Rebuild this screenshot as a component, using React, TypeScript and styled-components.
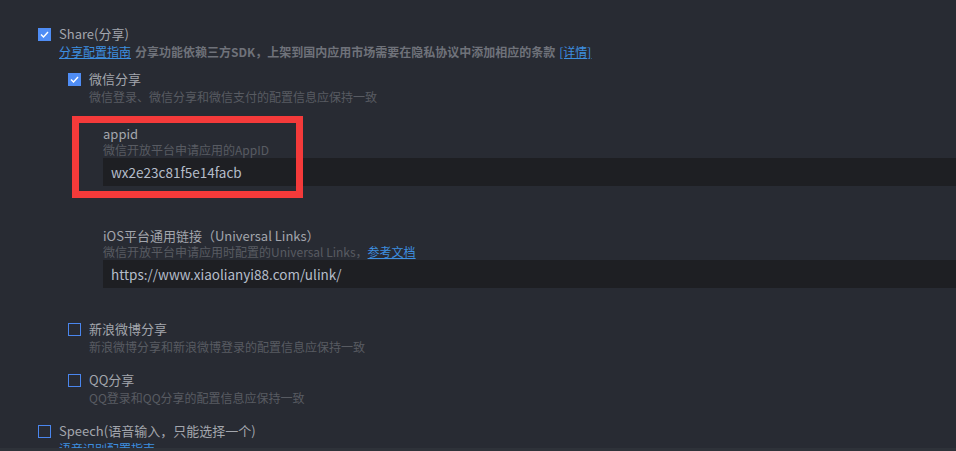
import React, { FC } from "react";
import styled, { createGlobalStyle } from "styled-components";

const GlobalStyle = createGlobalStyle`
  html, body {
    margin: 0;
    padding: 0;
    background: #282b33;
    overflow: hidden;
  }
  body {
    font-family: "Noto Sans CJK SC", "Noto Sans", sans-serif;
  }
`;

const Page = styled.div`
  position: relative;
  width: 956px;
  height: 451px;
  overflow: hidden;
  background: #282b33;
  padding: 24px 0 0 38px;
  box-sizing: border-box;
`;

const Section = styled.div<{ $gap?: number }>`
  display: flex;
  flex-direction: column;
  margin-top: ${(p) => p.$gap ?? 0}px;
`;

const CheckRow = styled.label`
  display: flex;
  align-items: center;
  height: 20px;
  gap: 8px;
  cursor: pointer;
`;

const Box = styled.span<{ $checked: boolean }>`
  width: 13px;
  height: 13px;
  box-sizing: border-box;
  flex-shrink: 0;
  display: flex;
  align-items: center;
  justify-content: center;
  background: ${(p) => (p.$checked ? "#4f8df5" : "transparent")};
  border: ${(p) => (p.$checked ? "none" : "1.5px solid #4a86ee")};
`;

const Title = styled.span`
  font-size: 13px;
  line-height: 20px;
  color: #a3a6ad;
`;

const Hint = styled.div<{ $bold?: boolean; $indent?: number }>`
  font-size: 12px;
  line-height: 16px;
  height: 16px;
  padding-left: ${(p) => p.$indent ?? 21}px;
  color: ${(p) => (p.$bold ? "#6f727a" : "#585b62")};
  font-weight: ${(p) => (p.$bold ? 600 : 400)};
  white-space: nowrap;
`;

const DocLink = styled.a`
  color: #3d8fe0;
  text-decoration: underline;
  font-weight: 400;
  margin-right: 4px;
`;

const TailLink = styled.a`
  color: #3d8fe0;
  text-decoration: underline;
  font-weight: 400;
  margin-left: 4px;
`;

const Children = styled.div`
  display: flex;
  flex-direction: column;
  padding-left: 30px;
  margin-top: 9px;
`;

const Field = styled.div<{ $gap: number }>`
  display: flex;
  flex-direction: column;
  padding-left: 35px;
  margin-top: ${(p) => p.$gap}px;
`;

const FieldLabel = styled.div`
  font-size: 13px;
  line-height: 17px;
  color: #a3a6ad;
`;

const FieldHint = styled.div`
  font-size: 12px;
  line-height: 16px;
  color: #585b62;
`;

const Input = styled.input`
  height: 28px;
  margin-right: -100px;
  border: none;
  outline: none;
  background: #1e1f23;
  color: #b5bdca;
  font-family: inherit;
  font-size: 13.5px;
  padding: 0 8px;
  box-sizing: border-box;
`;

const Highlight = styled.div`
  position: absolute;
  left: 72px;
  top: 116px;
  width: 231px;
  height: 82px;
  border: 7px solid #f43a3a;
  box-sizing: border-box;
  pointer-events: none;
`;

const BottomBar = styled.div`
  position: absolute;
  left: 0;
  right: 0;
  bottom: 0;
  height: 3px;
  background: #2e3239;
`;

const Check: FC<{ checked: boolean; label: string }> = ({ checked, label }) => (
  <CheckRow>
    <Box $checked={checked}>
      {checked && (
        <svg width="9" height="7" viewBox="0 0 9 7">
          <path d="M1 3.5 L3.5 6 L8 1" stroke="#fff" strokeWidth="1.4" fill="none" />
        </svg>
      )}
    </Box>
    <Title>{label}</Title>
  </CheckRow>
);

const App: FC = () => {
  return (
    <>
      <GlobalStyle />
      <Page>
        <Section>
          <Check checked label="Share(分享)" />
          <Hint $bold>
            <DocLink href="#">分享配置指南</DocLink>
            分享功能依赖三方SDK，上架到国内应用市场需要在隐私协议中添加相应的条款
            <TailLink href="#">[详情]</TailLink>
          </Hint>
          <Children>
            <Section>
              <Check checked label="微信分享" />
              <Hint>微信登录、微信分享和微信支付的配置信息应保持一致</Hint>
              <Field $gap={20}>
                <FieldLabel>appid</FieldLabel>
                <FieldHint>微信开放平台申请应用的AppID</FieldHint>
                <Input defaultValue="wx2e23c81f5e14facb" />
              </Field>
              <Field $gap={41}>
                <FieldLabel>iOS平台通用链接（Universal Links）</FieldLabel>
                <FieldHint>
                  微信开放平台申请应用时配置的Universal Links，
                  <DocLink href="#">参考文档</DocLink>
                </FieldHint>
                <Input defaultValue="https://www.xiaolianyi88.com/ulink/" />
              </Field>
            </Section>
            <Section $gap={31}>
              <Check checked={false} label="新浪微博分享" />
              <Hint>新浪微博分享和新浪微博登录的配置信息应保持一致</Hint>
            </Section>
            <Section $gap={15}>
              <Check checked={false} label="QQ分享" />
              <Hint>QQ登录和QQ分享的配置信息应保持一致</Hint>
            </Section>
          </Children>
        </Section>
        <Section $gap={15}>
          <Check checked={false} label="Speech(语音输入，只能选择一个)" />
          <Hint>
            <DocLink href="#">语音识别配置指南</DocLink>
          </Hint>
        </Section>
        <Highlight />
        <BottomBar />
      </Page>
    </>
  );
};

export default App;
